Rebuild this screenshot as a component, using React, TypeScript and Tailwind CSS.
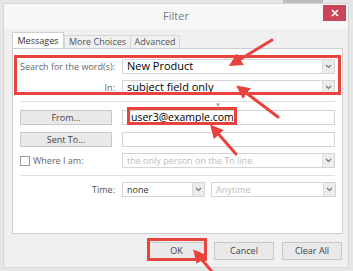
const font = { fontFamily: '"Open Sans", "Noto Sans", sans-serif' };

function Chevron() {
  return (
    <svg width="7" height="5" viewBox="0 0 7 5">
      <path d="M1 1 L3.5 3.5 L6 1" fill="none" stroke="#777" strokeWidth="1.2" />
    </svg>
  );
}

function Select({ text, big, disabled, className = "" }: { text: string; big?: boolean; disabled?: boolean; className?: string }) {
  return (
    <div className={`h-[15px] flex items-center border border-[#d4d4d4] bg-white ${className}`}>
      <span
        className={`flex-1 pl-[4px] truncate ${big ? "text-[11px] text-black" : "text-[9px]"} ${disabled ? "text-[#bcbcbc]" : "text-[#333]"}`}
      >
        {text}
      </span>
      <span className="w-[12px] h-[13px] flex items-center justify-center bg-[#ececec] border-l border-[#dcdcdc]">
        <Chevron />
      </span>
    </div>
  );
}

function Btn({ label, className = "" }: { label: string; className?: string }) {
  return (
    <div className={`flex items-center justify-center border border-[#c8c8c8] bg-[#e9e9e9] text-[9px] text-[#444] ${className}`}>
      {label}
    </div>
  );
}

export default function App() {
  return (
    <div className="relative w-[353px] h-[271px] overflow-hidden bg-[#e6e6e6]" style={font}>
      <div className="absolute top-0 right-[30px] w-[40px] h-[3px] bg-[#bdbdbd]" />
      <div className="mt-[3px] ml-[3px] w-[346px] h-[265px] border border-[#d6d6d6] bg-[#f0f0f0] flex flex-col">
        {/* title bar */}
        <div className="relative h-[25px] flex items-center justify-center bg-[#f7f7f7]">
          <span className="text-[11px] text-[#7a7a7a]">Filter</span>
          <div className="absolute right-[2px] top-[1px] w-[23px] h-[16px] bg-[#c84657] flex items-center justify-center">
            <svg width="8" height="8" viewBox="0 0 8 8">
              <path d="M1 1 L7 7 M7 1 L1 7" stroke="#fff" strokeWidth="1.6" />
            </svg>
          </div>
        </div>

        {/* tabs */}
        <div className="mt-[4px] ml-[8px] flex items-end h-[15px] text-[9px] text-[#555]">
          <div className="h-[16px] w-[52px] bg-white border border-b-0 border-[#cfcfcf] flex items-center justify-center text-[#333]">
            Messages
          </div>
          <div className="h-[13px] w-[67px] border border-b-0 border-[#d6d6d6] flex items-center justify-center">More Choices</div>
          <div className="h-[13px] w-[49px] border border-b-0 border-l-0 border-[#d6d6d6] flex items-center justify-center">Advanced</div>
        </div>

        {/* panel */}
        <div className="ml-[8px] w-[331px] h-[186px] bg-white border border-[#cfcfcf] px-[7px] pt-[10px] text-[9px] text-[#666]">
          <div className="grid grid-cols-[95px_213px] gap-x-[7px] gap-y-[6px] items-center">
            <span className="text-right">Search for the word(s):</span>
            <Select text="New Product" big />
            <span className="text-right">In:</span>
            <Select text="subject field only" big />
          </div>

          <div className="relative mt-[6px] h-[1px] bg-[#dedede]">
            <span className="absolute left-[195px] top-[1px] text-[6px] leading-none text-[#999]">▼</span>
          </div>

          <div className="mt-[8px] grid grid-cols-[92px_213px] gap-x-[10px] items-center">
            <Btn label="From..." className="h-[15px]" />
            <div className="h-[15px] border border-[#d4d4d4] bg-white flex items-center pl-[8px] text-[10.5px] text-black">
              user3@example.com
            </div>
          </div>
          <div className="mt-[7px] grid grid-cols-[92px_213px] gap-x-[10px] items-center">
            <Btn label="Sent To..." className="h-[15px]" />
            <div className="h-[15px] border border-[#d4d4d4] bg-white" />
          </div>
          <div className="mt-[6px] grid grid-cols-[102px_213px] items-center">
            <div className="flex items-center gap-[3px]">
              <span className="w-[10px] h-[10px] border border-[#9a9a9a] bg-white" />
              <span>Where I am:</span>
            </div>
            <Select text="the only person on the To line" disabled className="bg-[#f4f4f4]" />
          </div>

          <div className="mt-[7px] h-[1px] bg-[#dedede]" />

          <div className="mt-[6px] grid grid-cols-[95px_83px_124px] gap-x-[7px] items-center">
            <span className="text-right text-[#555]">Time:</span>
            <Select text="none" />
            <Select text="Anytime" disabled className="-ml-[1px]" />
          </div>
        </div>

        {/* buttons */}
        <div className="mt-[8px] ml-[143px] flex gap-[8px]">
          <Btn label="OK" className="w-[59px] h-[18px]" />
          <Btn label="Cancel" className="w-[60px] h-[18px]" />
          <Btn label="Clear All" className="w-[60px] h-[18px]" />
        </div>
      </div>

      {/* annotations */}
      <div className="absolute left-[14px] top-[55px] w-[327px] h-[40px] border-[3px] border-[#e8443d]" />
      <div className="absolute left-[127px] top-[107px] w-[110px] h-[18px] border-[3px] border-[#e8443d]" />
      <div className="absolute left-[147px] top-[238px] w-[60px] h-[23px] border-[3px] border-[#e8443d]" />
      <svg className="absolute inset-0" width="353" height="271" viewBox="0 0 353 271">
        <defs>
          <marker id="ah" markerWidth="4.5" markerHeight="4.5" refX="2.5" refY="2.25" orient="auto" markerUnits="strokeWidth">
            <path d="M0 0 L4.5 2.25 L0 4.5 Z" fill="#e8443d" />
          </marker>
        </defs>
        <g stroke="#e8443d" strokeWidth="3" strokeLinecap="round" markerEnd="url(#ah)">
          <line x1="272" y1="40" x2="234" y2="63" />
          <line x1="278" y1="117" x2="241" y2="89" />
          <line x1="236" y1="154" x2="214" y2="129" />
          <line x1="214" y1="274" x2="197" y2="254" />
        </g>
      </svg>
    </div>
  );
}
